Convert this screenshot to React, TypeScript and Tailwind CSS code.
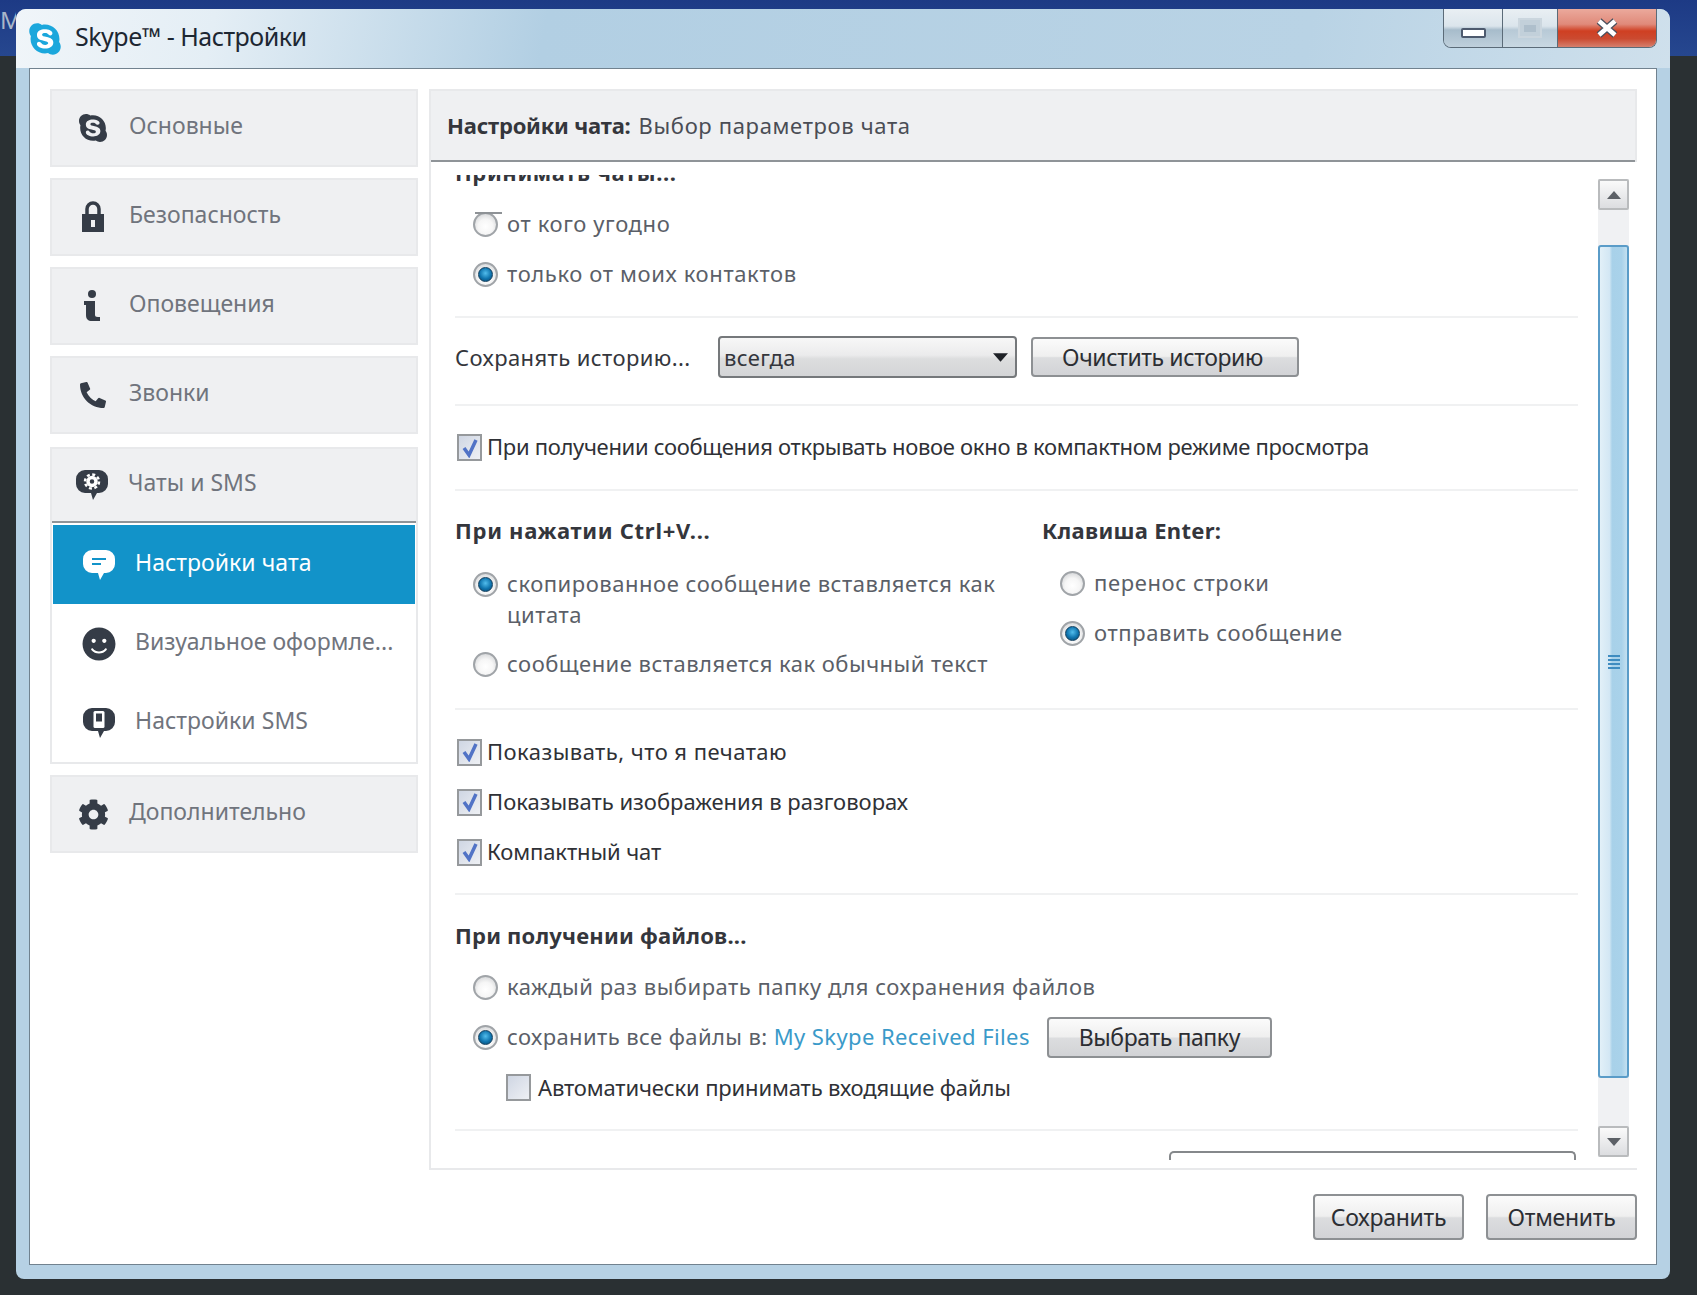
import { FaSkype, FaPhoneAlt, FaSmile, FaCog } from 'react-icons/fa';
import type { ReactNode } from 'react';

const navIconClass = 'w-[34px] h-[34px] flex items-center justify-center text-[#353c47] shrink-0';
const boldClass = 'h-[40px] leading-[40px] text-[22px] font-bold text-[#34363c]';

function Bubble({ children, color = '#353c47' }: { children: ReactNode; color?: string }) {
  return (
    <svg viewBox="0 0 34 32" className="w-[34px] h-[32px]">
      <path
        d="M10 1h14a9 9 0 0 1 9 9v5a9 9 0 0 1-9 9h-2l-4 7-2-7h-6a9 9 0 0 1-9-9v-5a9 9 0 0 1 9-9z"
        fill={color}
      />
      {children}
    </svg>
  );
}

function NavItem({ icon, label }: { icon: ReactNode; label: string }) {
  return (
    <div className="h-[78px] bg-[#eff0f2] border-2 border-[#e8e9eb] flex items-center pl-[24px] gap-[19px]">
      <div className={navIconClass}>{icon}</div>
      <span className="text-[23px] text-[#70747d] pb-[6px]">{label}</span>
    </div>
  );
}

function SubItem({ icon, label, active }: { icon: ReactNode; label: string; active?: boolean }) {
  return (
    <div
      className={`h-[79px] flex items-center pl-[29px] gap-[19px] ${active ? 'bg-[#1293c9]' : ''}`}
    >
      <div className={navIconClass}>{icon}</div>
      <span className={`text-[23px] tracking-[0.04px] pb-[4px] ${active ? 'text-white' : 'text-[#70747d]'}`}>
        {label}
      </span>
    </div>
  );
}

function Radio({ checked, focused }: { checked?: boolean; focused?: boolean }) {
  return (
    <span className="relative w-[25px] h-[25px] rounded-full shrink-0 border-2 border-[#a0a4a8] bg-[radial-gradient(circle_at_50%_60%,#ffffff_0,#f6f6f6_45%,#c6c8cb_100%)] flex items-center justify-center">
      {checked && (
        <span className="w-[15px] h-[15px] rounded-full border border-[#123f5e] bg-[radial-gradient(circle_at_50%_40%,#52bdec_0,#0f74ae_55%,#0b4468_100%)]" />
      )}
      {focused && (
        <span className="absolute -top-[2px] left-0 w-[27px] h-[2px] bg-[#8e9296]" />
      )}
    </span>
  );
}

function Check({ checked }: { checked?: boolean }) {
  return (
    <span className="w-[25px] h-[27px] shrink-0 border-2 border-[#96999c] bg-[linear-gradient(135deg,#cfd6e3,#eef0f4)] flex items-center justify-center">
      {checked && (
        <svg viewBox="0 0 20 20" className="w-[20px] h-[20px]">
          <path d="M4 10l5 7L16 2" fill="none" stroke="#5173c6" strokeWidth="3.5" />
        </svg>
      )}
    </span>
  );
}

function RadioRow({
  children,
  checked,
  focused,
  className = 'tracking-[0.62px]',
}: {
  children: ReactNode;
  checked?: boolean;
  focused?: boolean;
  className?: string;
}) {
  return (
    <div className={`flex items-center gap-[9px] pl-[18px] h-[50px] text-[22px] text-[#5b5f68] ${className}`}>
      <Radio checked={checked} focused={focused} />
      <span className="pb-[2px]">{children}</span>
    </div>
  );
}

function CheckRow({ children, checked, className = '' }: { children: ReactNode; checked?: boolean; className?: string }) {
  return (
    <div className={`flex items-center gap-[5px] pl-[2px] h-[50px] text-[22px] text-[#2f3136] ${className}`}>
      <Check checked={checked} />
      <span className="pb-[2px]">{children}</span>
    </div>
  );
}

function Button({ children, className = '' }: { children: ReactNode; className?: string }) {
  return (
    <div
      className={`flex items-center justify-center border-2 border-[#8d9093] rounded-[4px] text-[23px] tracking-[-0.3px] text-[#2c2e33] bg-[linear-gradient(180deg,#fbfbfb_0,#efefef_48%,#dcdddf_52%,#d2d3d6_100%)] ${className}`}
    >
      {children}
    </div>
  );
}

function ScrollButton({ up }: { up?: boolean }) {
  return (
    <div className="h-[31px] border-2 border-[#b9bbbd] rounded-[2px] bg-[linear-gradient(180deg,#fafafa,#dcdde0)] flex items-center justify-center shrink-0">
      <svg viewBox="0 0 14 8" className="w-[14px] h-[8px]">
        <path d={up ? 'M7 0l7 8H0z' : 'M0 0h14L7 8z'} fill="#5c6066" />
      </svg>
    </div>
  );
}

export default function App() {
  return (
    <div
      className="relative w-[1697px] h-[1295px] overflow-hidden pt-[9px] pl-[16px] bg-[linear-gradient(180deg,#1d3a85_0,#26478f_56px,#2a3033_56px)]"
      style={{ fontFamily: '"Noto Sans", sans-serif' }}
    >
      <span className="absolute left-0 top-[2px] w-[16px] overflow-hidden text-[24px] text-[#a9b7c9]">МС</span>

      <div className="w-[1654px] h-[1270px] rounded-t-[10px] rounded-b-[8px] flex flex-col px-[13px] bg-[#b6d1e4]">
        <div className="relative h-[59px] shrink-0 -mx-[13px] px-[13px] rounded-t-[10px] flex items-center gap-[11px] bg-[linear-gradient(100deg,#f0f5f9_0,#e4eef5_12%,#b2cfe3_32%,#b9d3e5_78%,#cfe0ec_100%)]">
          <div className="relative w-[34px] h-[34px] -ml-[1px] flex items-center justify-center">
            <span className="absolute w-[24px] h-[24px] rounded-full bg-white" />
            <FaSkype className="relative w-[36px] h-[36px] text-[#1ba7dc]" />
          </div>
          <span className="text-[25px] text-[#1d2732] tracking-[-0.5px] ml-[2px] pb-[4px]">Skype™ - Настройки</span>

          <div className="absolute right-[13px] top-0 h-[39px] flex border border-t-0 border-[#5b6b78] rounded-b-[8px] overflow-hidden">
            <div className="w-[59px] border-r border-[#5b6b78] flex items-end justify-center pb-[9px] bg-[linear-gradient(180deg,#e9eff3_0,#dbe5ec_45%,#a7bccb_55%,#bfd0dc_100%)]">
              <span className="w-[25px] h-[10px] bg-white border-2 border-[#4d5a6e] rounded-[2px]" />
            </div>
            <div className="w-[55px] border-r border-[#5b6b78] flex items-center justify-center bg-[linear-gradient(180deg,#e9eff3_0,#dbe5ec_45%,#b7c9d6_55%,#c9d8e2_100%)]">
              <span className="w-[24px] h-[20px] border-2 border-[#cbd6de] bg-[#c2d0da] flex items-center justify-center">
                <span className="w-[12px] h-[7px] bg-[#aebfcc]" />
              </span>
            </div>
            <div className="w-[98px] flex items-center justify-center bg-[linear-gradient(180deg,#eba99c_0,#e08a7a_40%,#cf3f22_58%,#cb4a30_78%,#d67f6d_100%)]">
              <svg viewBox="0 0 24 20" className="w-[24px] h-[20px]">
                <path d="M4 3l16 14M20 3L4 17" stroke="#4a4f5c" strokeWidth="7" />
                <path d="M4 3l16 14M20 3L4 17" stroke="#ffffff" strokeWidth="4.5" />
              </svg>
            </div>
          </div>
        </div>

        <div className="h-[1197px] bg-white border border-[#71828f] flex flex-col pl-[20px] pr-[19px] pt-[20px]">
          <div className="flex gap-[11px] h-[1081px]">
            <div className="w-[368px] flex flex-col gap-[11px]">
              <NavItem icon={<FaSkype className="w-[32px] h-[32px]" />} label="Основные" />
              <NavItem
                label="Безопасность"
                icon={
                  <svg viewBox="0 0 22 32" className="w-[22px] h-[32px]">
                    <path d="M5 14V8a6 6 0 0 1 12 0v6" fill="none" stroke="#353c47" strokeWidth="3.5" />
                    <path d="M0 13h22v18H0z" fill="#353c47" />
                    <rect x="9" y="19" width="4" height="7" fill="#eff0f2" />
                  </svg>
                }
              />
              <NavItem
                label="Оповещения"
                icon={
                  <svg viewBox="0 0 18 32" className="w-[18px] h-[32px]">
                    <circle cx="8" cy="4" r="4" fill="#353c47" />
                    <path d="M2 11h9v14c0 2 2 2 5 2v4H8c-4 0-6-2-6-6V15H0v-4z" fill="#353c47" />
                  </svg>
                }
              />
              <NavItem icon={<FaPhoneAlt className="w-[26px] h-[26px] -scale-x-100 rotate-90" />} label="Звонки" />

              <div className="mt-[2px] border-2 border-[#e8e9eb] h-[317px]">
                <div className="h-[74px] bg-[#eff0f2] border-b-2 border-[#8f9498] flex items-center pl-[23px] gap-[19px]">
                  <div className={navIconClass}>
                    <Bubble>
                      <circle cx="17" cy="12.5" r="4" fill="none" stroke="#fff" strokeWidth="3.5" />
                      <circle cx="17" cy="12.5" r="7" fill="none" stroke="#fff" strokeWidth="2.5" strokeDasharray="3 2.5" />
                    </Bubble>
                  </div>
                  <span className="text-[23px] text-[#70747d] pb-[5px]">Чаты и SMS</span>
                </div>
                <div className="p-[1px] pt-[2px]">
                  <SubItem
                    active
                    label="Настройки чата"
                    icon={
                      <Bubble color="#ffffff">
                        <path d="M10 10h14M10 15h9" stroke="#1293c9" strokeWidth="2" />
                      </Bubble>
                    }
                  />
                  <SubItem icon={<FaSmile className="w-[34px] h-[34px]" />} label="Визуальное оформле..." />
                  <SubItem
                    label="Настройки SMS"
                    icon={
                      <Bubble>
                        <rect x="11.5" y="4" width="11" height="17" rx="1.5" fill="#fff" />
                        <rect x="14" y="6.5" width="6" height="8" fill="#353c47" />
                      </Bubble>
                    }
                  />
                </div>
              </div>

              <NavItem icon={<FaCog className="w-[31px] h-[31px]" />} label="Дополнительно" />
            </div>

            <div className="w-[1208px] flex flex-col">
              <div className="h-[73px] shrink-0 bg-[#eff0f2] border-2 border-b-0 border-[#e8e9eb] shadow-[inset_0_-2px_0_#8f9498] flex items-center pl-[16px] pb-[3px] text-[22px] tracking-[0.65px] text-[#4a4d55]">
                <span className="font-bold text-[#34363c] tracking-[-0.2px] mr-[8px]">Настройки чата:</span>
                Выбор параметров чата
              </div>

              <div className="h-[1008px] flex border-l-2 border-b-2 border-[#e8e9eb]">
                <div className="w-[1167px] mt-[13px] h-[985px] overflow-hidden pl-[24px] pr-[20px]">
                  <div className="-mt-[23px]">
                    <section className="h-[166px] border-b-2 border-[#f0f1f2]">
                      <div className="h-[47px] pt-[4px] text-[22px] font-bold text-[#34363c] tracking-[0.6px]">Принимать чаты...</div>
                      <RadioRow focused>от кого угодно</RadioRow>
                      <RadioRow checked>только от моих контактов</RadioRow>
                    </section>

                    <section className="h-[88px] pb-[8px] border-b-2 border-[#f0f1f2] flex items-center text-[22px] tracking-[0.4px] text-[#34363c]">
                      <span className="w-[263px]">Сохранять историю...</span>
                      <div className="w-[299px] h-[42px] border-2 border-[#75787b] rounded-[4px] flex items-center justify-between pl-[4px] pr-[7px] bg-[linear-gradient(180deg,#f7f7f7_0,#ebebec_45%,#dcddde_55%,#d4d5d7_100%)]">
                        <span>всегда</span>
                        <svg viewBox="0 0 14 8" className="w-[15px] h-[9px]">
                          <path d="M0 0h14L7 8z" fill="#1e2126" />
                        </svg>
                      </div>
                      <Button className="w-[268px] h-[40px] ml-[14px] pr-[5px] tracking-[-0.4px]">Очистить историю</Button>
                    </section>

                    <section className="h-[85px] border-b-2 border-[#f0f1f2] flex items-center">
                      <CheckRow checked className="tracking-[-0.31px]">При получении сообщения открывать новое окно в компактном режиме просмотра</CheckRow>
                    </section>

                    <section className="h-[219px] border-b-2 border-[#f0f1f2] pt-[19px] flex">
                      <div className="w-[587px]">
                        <div className={`${boldClass} tracking-[0.7px] mb-[19px]`}>При нажатии Ctrl+V...</div>
                        <div className="flex gap-[9px] pl-[18px] text-[22px] tracking-[0.53px] leading-[31px] text-[#5b5f68]">
                          <span className="mt-[3px]">
                            <Radio checked />
                          </span>
                          <span className="w-[540px] -mt-[1px]">скопированное сообщение вставляется как цитата</span>
                        </div>
                        <RadioRow className="mt-[9px] tracking-[0.48px]">сообщение вставляется как обычный текст</RadioRow>
                      </div>
                      <div>
                        <div className={`${boldClass} tracking-[0.3px] mb-[8px]`}>Клавиша Enter:</div>
                        <RadioRow>перенос строки</RadioRow>
                        <RadioRow checked>отправить сообщение</RadioRow>
                      </div>
                    </section>

                    <section className="h-[185px] border-b-2 border-[#f0f1f2] pt-[17px]">
                      <CheckRow checked className="tracking-[0.45px]">Показывать, что я печатаю</CheckRow>
                      <CheckRow checked className="tracking-[0px]">Показывать изображения в разговорах</CheckRow>
                      <CheckRow checked className="tracking-[-0.1px]">Компактный чат</CheckRow>
                    </section>

                    <section className="h-[236px] border-b-2 border-[#f0f1f2] pt-[20px]">
                      <div className={`${boldClass} tracking-[0.2px] mb-[7px]`}>При получении файлов...</div>
                      <RadioRow className="tracking-[0.5px]">каждый раз выбирать папку для сохранения файлов</RadioRow>
                      <div className="flex items-center">
                        <RadioRow checked className="tracking-[0.4px]">
                          сохранить все файлы в: <span className="text-[#3a9ac9]">My Skype Received Files</span>
                        </RadioRow>
                        <Button className="w-[225px] h-[41px] ml-[17px] tracking-[-0.4px]">Выбрать папку</Button>
                      </div>
                      <CheckRow className="pl-[51px] tracking-[-0.14px]">
                        <span className="inline-block ml-[2px] mt-[2px]">Автоматически принимать входящие файлы</span>
                      </CheckRow>
                    </section>

                    <div className="mt-[20px] ml-[714px] w-[407px] h-[20px] border-2 border-b-0 border-[#85888b] rounded-t-[5px]" />
                  </div>
                </div>

                <div className="w-[31px] mt-[17px] h-[978px] flex flex-col bg-[#f0f1f3]">
                  <ScrollButton up />
                  <div className="flex-1 pt-[35px] pb-[48px]">
                    <div className="h-full border-2 border-[#5a9cc8] rounded-[3px] flex items-center justify-center bg-[linear-gradient(90deg,#e2f0f8_0,#d3e7f4_35%,#a8d1e9_45%,#a9d2ea_80%,#c4e0f0_100%)]">
                      <div className="w-[12px] h-[14px] flex flex-col justify-between">
                        <span className="h-[2px] bg-[#3f8cc0]" />
                        <span className="h-[2px] bg-[#3f8cc0]" />
                        <span className="h-[2px] bg-[#3f8cc0]" />
                        <span className="h-[2px] bg-[#3f8cc0]" />
                      </div>
                    </div>
                  </div>
                  <ScrollButton />
                </div>
              </div>
            </div>
          </div>

          <div className="flex justify-end gap-[22px] pt-[24px]">
            <Button className="w-[151px] h-[46px]">Сохранить</Button>
            <Button className="w-[151px] h-[46px]">Отменить</Button>
          </div>
        </div>
      </div>
    </div>
  );
}
